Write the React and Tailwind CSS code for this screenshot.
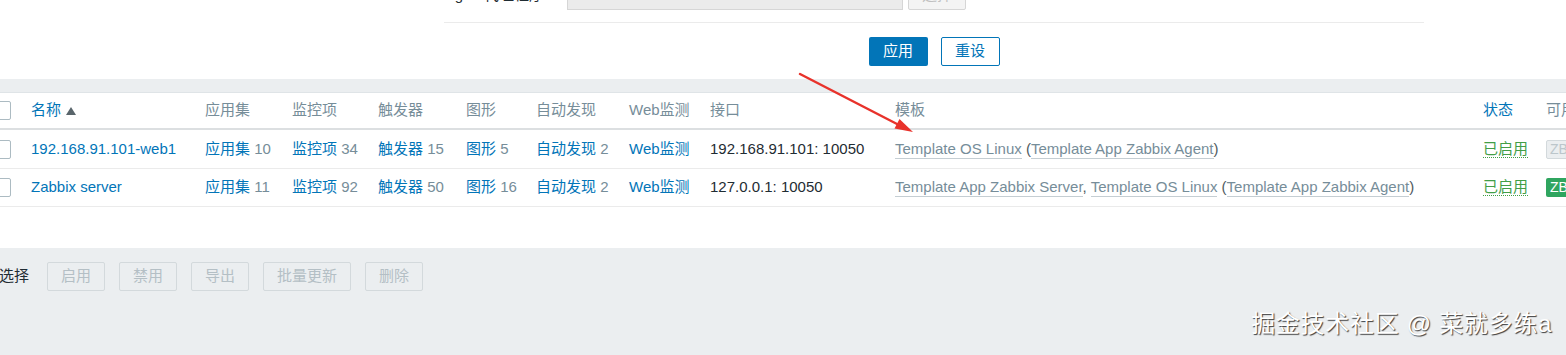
import React from 'react';

const cols = 'grid grid-cols-[39px_174px_87px_86px_88px_70px_93px_81px_185px_588px_63px_1fr] items-center';

const Check = () => (
  <div className="w-[19px] h-[19px] bg-white border border-[#acbbc2] rounded-[2px]" />
);

const Link = ({ children }) => <span className="text-[#0275b8]">{children}</span>;
const Count = ({ children }) => <span className="text-[#768d99]"> {children}</span>;
const Tpl = ({ children }) => (
  <span className="text-[#768d99] border-b border-[#c5ced3] pb-[1px]">{children}</span>
);

const hosts = [
  {
    name: '192.168.91.101-web1',
    apps: 10, items: 34, triggers: 15, graphs: 5, discovery: 2,
    iface: '192.168.91.101: 10050',
    templates: (
      <>
        <Tpl>Template OS Linux</Tpl> (<Tpl>Template App Zabbix Agent</Tpl>)
      </>
    ),
    zbx: false,
  },
  {
    name: 'Zabbix server',
    apps: 11, items: 92, triggers: 50, graphs: 16, discovery: 2,
    iface: '127.0.0.1: 10050',
    templates: (
      <>
        <Tpl>Template App Zabbix Server</Tpl>, <Tpl>Template OS Linux</Tpl> (<Tpl>Template App Zabbix Agent</Tpl>)
      </>
    ),
    zbx: true,
  },
];

const Btn = ({ children, w = 'w-[58px]' }) => (
  <button className={`${w} h-[29px] border border-[#d3d9dc] rounded-[2px] text-[#b4bfc5] text-[15px]`}>
    {children}
  </button>
);

export default function App() {
  return (
    <div className="relative w-[1566px] h-[355px] overflow-hidden bg-[#ebeef0] text-[15px] text-[#1f2c33] font-['Liberation_Sans','Noto_Sans_CJK_SC',sans-serif]">
      {/* filter form */}
      <div className="bg-white h-[79px] overflow-hidden">
        <div className="ml-[444px] w-[980px] -mt-[20px]">
          <div className="flex items-start h-[43px] border-b border-[#ebebeb]">
            <div className="w-[100px] text-right leading-[30px] text-[#1f2c33]">agent代理程序</div>
            <div className="ml-[23px] w-[336px] h-[30px] bg-[#ebebeb] border border-[#d6d6d6]" />
            <button className="ml-[5px] w-[58px] h-[30px] border border-[#d6d6d6] rounded-[2px] bg-[#f4f4f4] text-[#c0c0c0]">选择</button>
          </div>
          <div className="flex justify-center gap-[13px] pt-[14px]">
            <button className="w-[59px] h-[29px] bg-[#0275b8] text-white rounded-[2px]">应用</button>
            <button className="w-[59px] h-[29px] bg-white border border-[#0275b8] text-[#0275b8] rounded-[2px]">重设</button>
          </div>
        </div>
      </div>

      <div className="h-[14px] border-b border-[#dfe4e7]" />

      {/* host table */}
      <div className="bg-white h-[155px] -ml-[8px] whitespace-nowrap">
        <div className={`${cols} h-[37px] border-b-2 border-[#dcdfe1] text-[#768d99]`}>
          <Check />
          <div className="flex items-center gap-[5px] text-[#0275b8]">
            名称
            <svg width="10" height="8" viewBox="0 0 10 8"><path d="M5 0L10 8H0Z" fill="#59656b" /></svg>
          </div>
          <div>应用集</div>
          <div>监控项</div>
          <div>触发器</div>
          <div>图形</div>
          <div>自动发现</div>
          <div>Web监测</div>
          <div>接口</div>
          <div>模板</div>
          <div className="text-[#0275b8]">状态</div>
          <div>可用性</div>
        </div>
        {hosts.map((h, i) => (
          <div key={h.name} className={`${cols} ${i === 0 ? 'h-[39px]' : 'h-[38px]'} border-b border-[#ebebeb]`}>
            <Check />
            <Link>{h.name}</Link>
            <div><Link>应用集</Link><Count>{h.apps}</Count></div>
            <div><Link>监控项</Link><Count>{h.items}</Count></div>
            <div><Link>触发器</Link><Count>{h.triggers}</Count></div>
            <div><Link>图形</Link><Count>{h.graphs}</Count></div>
            <div><Link>自动发现</Link><Count>{h.discovery}</Count></div>
            <Link>Web监测</Link>
            <div>{h.iface}</div>
            <div className="text-[#4f5a60]">{h.templates}</div>
            <div>
              <span className="text-[#429e47] border-b border-dotted border-[#429e47]">已启用</span>
            </div>
            <div>
              {h.zbx ? (
                <span className="inline-block h-[19px] leading-[19px] px-[4px] rounded-[2px] bg-[#2fa55f] text-white text-[14px]">ZBX</span>
              ) : (
                <span className="inline-block h-[19px] leading-[17px] px-[3px] rounded-[2px] bg-[#ebeef0] border border-[#d3d9dc] text-[#bcc6cb] text-[14px]">ZBX</span>
              )}
            </div>
          </div>
        ))}
      </div>

      {/* mass actions */}
      <div className="flex items-center gap-[14px] pt-[14px] -ml-[1px]">
        <span className="mr-[4px] text-[#1f2c33]">选择</span>
        <Btn>启用</Btn>
        <Btn>禁用</Btn>
        <Btn>导出</Btn>
        <Btn w="w-[88px]">批量更新</Btn>
        <Btn>删除</Btn>
      </div>

      {/* annotation arrow */}
      <svg className="absolute left-[790px] top-[65px]" width="130" height="75" viewBox="0 0 130 75">
        <path d="M10 9L107 59" stroke="#e8322b" strokeWidth="2.5" strokeLinecap="round" />
        <path d="M123 67L104.5 63.5L109.5 54Z" fill="#e8322b" />
      </svg>

      {/* watermark */}
      <div className="absolute right-[14px] bottom-[13px] text-[24px] text-white tracking-[0.7px] [text-shadow:1px_1px_1px_rgba(0,0,0,0.75)]">
        掘金技术社区 @ 菜就多练a
      </div>
    </div>
  );
}
